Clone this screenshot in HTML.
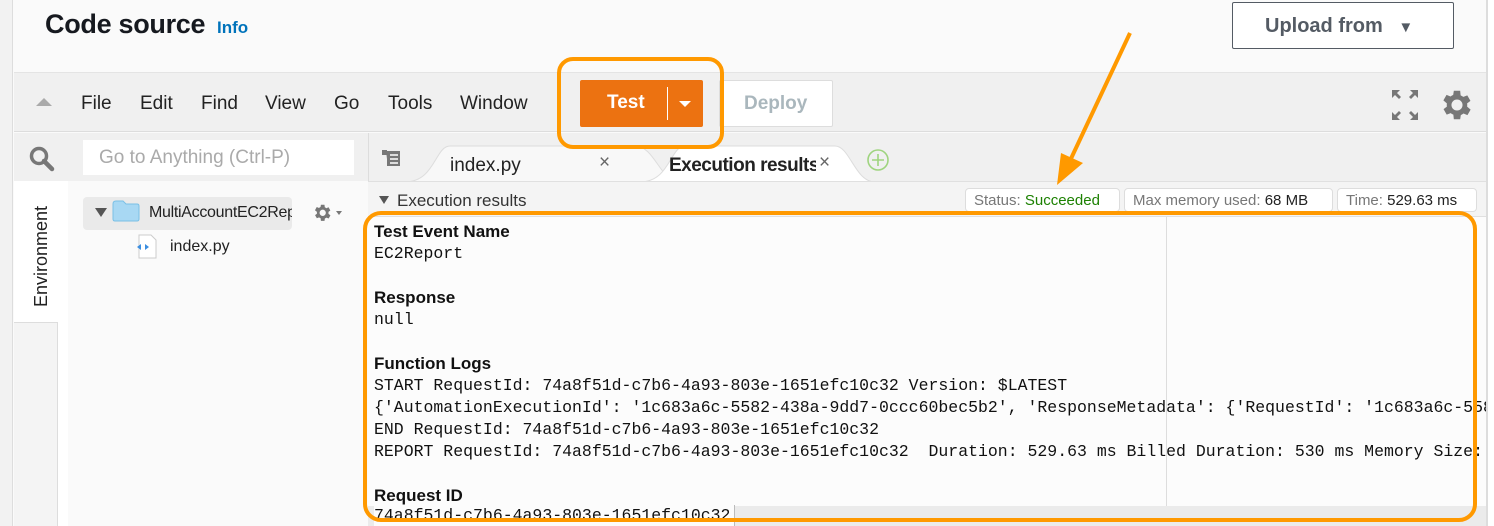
<!DOCTYPE html>
<html><head><meta charset="utf-8"><style>
*{box-sizing:border-box;margin:0;padding:0}
body{width:1494px;height:526px;overflow:hidden;background:#fafafa;font-family:"Liberation Sans",sans-serif;position:relative}
.a{position:absolute}
.mono{font-family:"Liberation Mono",monospace;font-size:16.5px;color:#111;white-space:pre;line-height:22px}
.b{font-weight:bold;font-size:17px;color:#111}
</style></head><body>
<div class="a" style="left:0;top:0;width:13px;height:526px;background:#f2f2f2;border-right:1px solid #ddd"></div>
<div class="a" style="left:1486px;top:0;width:8px;height:526px;background:#fff;border-left:2px solid #ddd"></div>
<div class="a" style="left:45px;top:9px;font-size:27px;font-weight:bold;color:#16191f;letter-spacing:-0.3px">Code source</div>
<div class="a" style="left:217px;top:18px;font-size:17px;font-weight:bold;color:#0073bb">Info</div>
<div class="a" style="left:1232px;top:2px;width:222px;height:47px;border:1px solid #545b64;border-radius:2px;background:#fff;font-weight:bold;font-size:20px;color:#545b64;padding:12px 0 0 32px">Upload from <span style="font-size:15px;margin-left:10px">▼</span></div>
<!-- menu bar -->
<div class="a" style="left:14px;top:72px;width:1472px;height:60px;background:#f0f0f0;border-top:1px solid #e4e4e4;border-bottom:1px solid #ddd"></div>
<div class="a" style="left:36px;top:98px;width:0;height:0;border-left:8px solid transparent;border-right:8px solid transparent;border-bottom:8px solid #aaa"></div>
<div class="a" style="top:93px;left:81px;font-size:19px;color:#222">File</div>
<div class="a" style="top:93px;left:140px;font-size:19px;color:#222">Edit</div>
<div class="a" style="top:93px;left:201px;font-size:19px;color:#222">Find</div>
<div class="a" style="top:93px;left:265px;font-size:19px;color:#222">View</div>
<div class="a" style="top:93px;left:334px;font-size:19px;color:#222">Go</div>
<div class="a" style="top:93px;left:388px;font-size:19px;color:#222">Tools</div>
<div class="a" style="top:93px;left:460px;font-size:19px;color:#222">Window</div>
<div class="a" style="left:580px;top:80px;width:123px;height:47px;background:#ec7211;border-radius:2px"></div>
<div class="a" style="left:607px;top:92px;font-size:19px;font-weight:bold;color:#fff">Test</div>
<div class="a" style="left:667px;top:87px;width:1px;height:33px;background:#fff"></div>
<div class="a" style="left:679px;top:101px;width:0;height:0;border-left:6px solid transparent;border-right:6px solid transparent;border-top:6px solid #fff"></div>
<div class="a" style="left:719px;top:80px;width:114px;height:47px;background:#fff;border:1px solid #ddd;border-radius:2px;font-size:19px;font-weight:bold;color:#aab7bd;padding:12px 0 0 24px">Deploy</div>
<!-- fullscreen & gear -->
<svg class="a" style="left:1392px;top:90px" width="26" height="30" viewBox="0 0 26 30" fill="#777"><path d="M0 0h8l-3 3 4 4-2 2-4-4-3 3zM26 0h-8l3 3-4 4 2 2 4-4 3 3zM0 30h8l-3-3 4-4-2-2-4 4-3-3zM26 30h-8l3-3-4-4 2-2 4 4 3-3z"/></svg>
<svg class="a" style="left:1438px;top:86px" width="38" height="38" viewBox="0 0 24 24"><path fill="#777" d="M19.4 13a7.5 7.5 0 000-2l2.1-1.6-2-3.5-2.5 1a7.4 7.4 0 00-1.7-1L15 3h-4l-.4 2.6a7.4 7.4 0 00-1.7 1l-2.5-1-2 3.5L6.6 11a7.5 7.5 0 000 2l-2.1 1.6 2 3.5 2.5-1a7.4 7.4 0 001.7 1L11 21h4l.4-2.6a7.4 7.4 0 001.7-1l2.5 1 2-3.5zM13 15.5a3.5 3.5 0 110-7 3.5 3.5 0 010 7z" transform="translate(-1 0)"/></svg>
<!-- left columns -->
<div class="a" style="left:14px;top:133px;width:354px;height:48px;background:#f0f0f0"></div>
<svg class="a" style="left:29px;top:146px" width="26" height="26" viewBox="0 0 26 26"><circle cx="10" cy="10" r="7.5" fill="none" stroke="#777" stroke-width="3.5"/><path d="M15 15l8 8" stroke="#777" stroke-width="4.5" stroke-linecap="round"/></svg>
<div class="a" style="left:83px;top:140px;width:271px;height:35px;background:#fff;font-size:19px;color:#aaa;padding:7px 0 0 16px">Go to Anything (Ctrl-P)</div>
<div class="a" style="left:14px;top:181px;width:54px;height:345px;background:#fff"></div>
<div class="a" style="left:14px;top:322px;width:44px;height:204px;background:#f4f4f4;border-top:1px solid #ddd;border-right:1px solid #ddd"></div>
<div class="a" style="left:31px;top:307px;transform:rotate(-90deg);transform-origin:0 0;font-size:18px;color:#222">Environment</div>
<div class="a" style="left:68px;top:181px;width:300px;height:345px;background:#fafafa"></div>
<div class="a" style="left:83px;top:197px;width:209px;height:33px;background:#eaeaea;border-radius:4px"></div>
<div class="a" style="left:95px;top:208px;border-left:6px solid transparent;border-right:6px solid transparent;border-top:9px solid #555"></div>
<svg class="a" style="left:112px;top:200px" width="28" height="22"><path d="M1 4q0-3 3-3h7l3 3h11q2 0 2 2v13q0 2-2 2H3q-2 0-2-2z" fill="#a8d8f3" stroke="#7ac0e6"/></svg>
<div class="a" style="left:149px;top:204px;width:143px;overflow:hidden;white-space:nowrap;font-size:16px;color:#222;letter-spacing:-0.3px">MultiAccountEC2Report</div>
<svg class="a" style="left:310px;top:201px" width="36" height="24" viewBox="0 0 36 24"><path fill="#777" transform="translate(1 1) scale(0.9)" d="M19.4 13a7.5 7.5 0 000-2l2.1-1.6-2-3.5-2.5 1a7.4 7.4 0 00-1.7-1L15 3h-4l-.4 2.6a7.4 7.4 0 00-1.7 1l-2.5-1-2 3.5L6.6 11a7.5 7.5 0 000 2l-2.1 1.6 2 3.5 2.5-1a7.4 7.4 0 001.7 1L11 21h4l.4-2.6a7.4 7.4 0 001.7-1l2.5 1 2-3.5zM13 15.5a3.5 3.5 0 110-7 3.5 3.5 0 010 7z"/><path d="M26 10h6l-3 4z" fill="#777"/></svg>
<svg class="a" style="left:134px;top:234px" width="26" height="26"><path d="M5 1h12l5 5v18H5z" fill="#fff" stroke="#ccc"/><path d="M7 10l-4 3 4 3zM11 10l4 3-4 3z" fill="#3b8ee0"/></svg>
<div class="a" style="left:170px;top:238px;font-size:16px;color:#222">index.py</div>
<!-- tabs -->
<div class="a" style="left:368px;top:133px;width:1118px;height:48px;background:#f0f0f0;border-left:1px solid #ddd"></div>
<svg class="a" style="left:382px;top:150px" width="22" height="18"><path d="M0 0h5v5H0z M4 1h14v15H5V9" fill="#777"/><path d="M8 5h8M8 9h8M8 13h8" stroke="#fff" stroke-width="1.5"/></svg>
<svg class="a" style="left:405px;top:144px" width="470" height="38"><path d="M0 38 C30 38 30 2 45 2 H230 C250 2 255 38 275 38Z" fill="#f8f8f8" stroke="#ddd"/><path d="M235 38 C265 38 265 2 280 2 H430 C445 2 450 38 470 38Z" fill="#fff" stroke="#ddd"/></svg>
<div class="a" style="left:450px;top:155px;font-size:19px;color:#222">index.py</div>
<div class="a" style="left:599px;top:152px;font-size:19px;color:#666">×</div>
<div class="a" style="left:669px;top:155px;width:147px;overflow:hidden;white-space:nowrap;font-size:19px;font-weight:bold;color:#222;letter-spacing:-0.5px">Execution results</div>
<div class="a" style="left:819px;top:152px;font-size:19px;color:#666">×</div>
<svg class="a" style="left:865px;top:147px" width="26" height="26"><circle cx="13" cy="13" r="10" fill="none" stroke="#9fd47f" stroke-width="1.6"/><path d="M13 7v12M7 13h12" stroke="#9fd47f" stroke-width="1.6"/></svg>
<div class="a" style="left:368px;top:181px;width:1118px;height:1px;background:#e0e0e0"></div>
<!-- results header -->
<div class="a" style="left:368px;top:182px;width:1118px;height:34px;background:#f4f4f4"></div>
<div class="a" style="left:379px;top:196px;border-left:5px solid transparent;border-right:5px solid transparent;border-top:8px solid #555"></div>
<div class="a" style="left:397px;top:191px;font-size:17px;color:#333">Execution results</div>
<div class="a" style="left:965px;top:188px;width:155px;height:24px;background:#fff;border:1px solid #ddd;border-radius:4px;font-size:15px;color:#777;padding:3px 0 0 8px">Status: <span style="color:#1d8102">Succeeded</span></div>
<div class="a" style="left:1124px;top:188px;width:209px;height:24px;background:#fff;border:1px solid #ddd;border-radius:4px;font-size:15px;color:#777;padding:3px 0 0 8px">Max memory used: <span style="color:#222">68 MB</span></div>
<div class="a" style="left:1337px;top:188px;width:140px;height:24px;background:#fff;border:1px solid #ddd;border-radius:4px;font-size:15px;color:#777;padding:3px 0 0 8px">Time: <span style="color:#222">529.63 ms</span></div>
<!-- results body -->
<div class="a" style="left:368px;top:216px;width:1118px;height:310px;background:#fcfcfc;border-top:1px solid #e0e0e0;overflow:hidden">
<div class="a" style="left:798px;top:0;width:1px;height:310px;background:#ddd"></div>
<div class="a" style="left:0;top:289px;width:1118px;height:21px;background:#ebebeb"></div>
<div class="a b" style="left:6px;top:5px">Test Event Name</div>
<div class="a mono" style="left:6px;top:26px">EC2Report</div>
<div class="a b" style="left:6px;top:71px">Response</div>
<div class="a mono" style="left:6px;top:92px">null</div>
<div class="a b" style="left:6px;top:137px">Function Logs</div>
<div class="a mono" style="left:6px;top:158px">START RequestId: 74a8f51d-c7b6-4a93-803e-1651efc10c32 Version: $LATEST
{'AutomationExecutionId': '1c683a6c-5582-438a-9dd7-0ccc60bec5b2', 'ResponseMetadata': {'RequestId': '1c683a6c-5582
END RequestId: 74a8f51d-c7b6-4a93-803e-1651efc10c32
REPORT RequestId: 74a8f51d-c7b6-4a93-803e-1651efc10c32  Duration: 529.63 ms Billed Duration: 530 ms Memory Size: 128</div>
<div class="a b" style="left:6px;top:269px">Request ID</div>
<div class="a mono" style="left:6px;top:288px;background:#fcfcfc;padding-right:4px;border-right:1px solid #bbb">74a8f51d-c7b6-4a93-803e-1651efc10c32</div>
</div>
<div class="a" style="left:363px;top:211px;width:1114px;height:311px;border:4px solid #f90;border-radius:18px"></div>
<div class="a" style="left:557px;top:57px;width:167px;height:92px;border:4px solid #f90;border-radius:16px"></div>
<!-- arrow -->
<svg class="a" style="left:1040px;top:25px" width="100" height="170"><path d="M90 8 L28 140" stroke="#f90" stroke-width="4" fill="none"/><path d="M17 160 L21 128 L43 138 Z" fill="#f90"/></svg>
</body></html>
